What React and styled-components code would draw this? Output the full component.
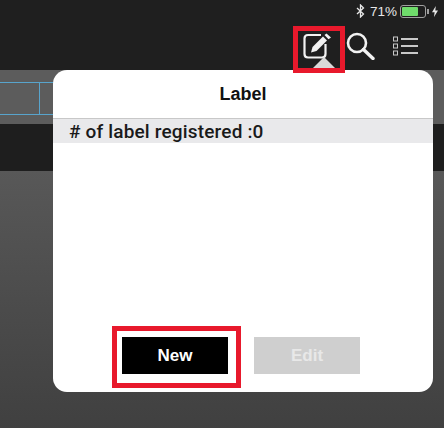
import React from 'react';
import styled, { createGlobalStyle } from 'styled-components';

const Global = createGlobalStyle`
  html, body { margin: 0; padding: 0; background: #1f1f1f; }
  * { box-sizing: border-box; }
`;

const Page = styled.div`
  position: relative;
  width: 444px;
  height: 428px;
  overflow: hidden;
  display: flex;
  flex-direction: column;
  font-family: "Liberation Sans", Arial, sans-serif;
  background: #1f1f1f;
`;

const StatusBar = styled.div`
  height: 22px;
  display: flex;
  align-items: center;
  justify-content: flex-end;
  padding-right: 6px;
  color: #e8e8e8;
  font-size: 13.5px;
`;

const Percent = styled.span`
  margin: 0 3px 0 5px;
`;

const Battery = styled.div`
  width: 26px;
  height: 13px;
  border: 1px solid #a0a0a0;
  border-radius: 3px;
  padding: 1px;
`;

const BatteryLevel = styled.div`
  height: 100%;
  background: #6fdc6b;
  border-radius: 1px;
`;

const BatteryNub = styled.div`
  width: 2px;
  height: 5px;
  background: #a0a0a0;
  margin: 0 3px 0 1px;
`;

const NavBar = styled.div`
  height: 48px;
  display: flex;
  align-items: flex-start;
  justify-content: flex-end;
  padding: 10px 26px 0 0;
`;

const IconWrap = styled.div`
  height: 28px;
  display: flex;
  align-items: center;
  margin-left: ${p => p.$gap || 0}px;
`;

const Toolbar = styled.div`
  height: 54px;
  background: #5c5c5c;
  padding: 12px 30px 0 0;
`;

const Grid = styled.div`
  height: 33px;
  border-top: 1px solid #58a4cc;
  border-bottom: 1px solid #58a4cc;
  padding-left: 39px;
`;

const GridCell = styled.div`
  height: 100%;
  border-left: 1px solid #58a4cc;
`;

const DarkBand = styled.div`
  height: 47px;
  background: #1e1e1e;
`;

const Content = styled.div`
  flex: 1;
  background: linear-gradient(#585858, #404040);
`;

const Popover = styled.div`
  position: absolute;
  left: 53px;
  top: 70px;
  width: 380px;
  height: 322px;
  background: #fff;
  border-radius: 14px;
  display: flex;
  flex-direction: column;
  overflow: hidden;
`;

const Title = styled.div`
  height: 48px;
  display: flex;
  align-items: center;
  justify-content: center;
  font-size: 18px;
  font-weight: 700;
  color: #111;
`;

const CountRow = styled.div`
  height: 25px;
  background: #e9e9eb;
  border-top: 1px solid #c8c8c8;
  padding-left: 16px;
  font-family: Roboto, "Liberation Sans", sans-serif;
  font-size: 19px;
  font-weight: 500;
  letter-spacing: 0.17px;
  line-height: 25px;
  color: #1a1a1a;
`;

const Spacer = styled.div`
  flex: 1;
`;

const Buttons = styled.div`
  display: flex;
  justify-content: center;
  gap: 26px;
  padding: 0 4px 18px 0;
`;

const Button = styled.div`
  width: 106px;
  height: 37px;
  display: flex;
  align-items: center;
  justify-content: center;
  font-size: 17px;
  font-weight: 700;
  color: ${p => (p.$primary ? '#fff' : '#e8e8e8')};
  background: ${p => (p.$primary ? '#000' : '#cfcfcf')};
`;

const Highlight = styled.div`
  position: absolute;
  border: 5px solid #e8192c;
  left: ${p => p.$x}px;
  top: ${p => p.$y}px;
  width: ${p => p.$w}px;
  height: ${p => p.$h}px;
`;

const Pointer = styled.div`
  position: absolute;
  left: 311px;
  top: 57px;
  width: 0;
  height: 0;
  border-left: 13px solid transparent;
  border-right: 13px solid transparent;
  border-bottom: 13px solid #d9d9d9;
`;

const BluetoothIcon = () => (
  <svg width="9" height="14" viewBox="0 0 9 14" fill="none" stroke="#e8e8e8" strokeWidth="1.3">
    <path d="M1 4 L7.5 10 L4.5 13 V1 L7.5 4 L1 10" />
  </svg>
);

const BoltIcon = () => (
  <svg width="6" height="11" viewBox="0 0 6 11" fill="#e8e8e8">
    <path d="M3.8 0 L0 6.2 H2.6 L2 11 L6 4.4 H3.3 Z" />
  </svg>
);

const EditIcon = () => (
  <svg width="29" height="26" viewBox="0 0 29 26" fill="none">
    <path d="M18 2 H5 Q1.5 2 1.5 5.5 V21 Q1.5 24.5 5 24.5 H19 Q22.5 24.5 22.5 21 V11" stroke="#f2f2f2" strokeWidth="2.2" />
    <path d="M8 19.5 L9.5 14 L20 3.5 L24 7.5 L13.5 18 Z" fill="#f2f2f2" />
    <path d="M21.5 2 L23.5 0.5 L28 4.5 L25.5 6.3 Z" fill="#f2f2f2" />
  </svg>
);

const SearchIcon = () => (
  <svg width="29" height="28" viewBox="0 0 29 28" fill="none" stroke="#f2f2f2">
    <circle cx="11" cy="11" r="9" strokeWidth="2.6" />
    <path d="M17.5 17.5 L27 26.5" strokeWidth="3.4" strokeLinecap="round" />
  </svg>
);

const ListIcon = () => (
  <svg width="25" height="20" viewBox="0 0 25 20" fill="none" stroke="#c9c9c9">
    <rect x="0.5" y="1" width="4" height="4" />
    <rect x="0.5" y="8" width="4" height="4" />
    <rect x="0.5" y="15" width="4" height="4" />
    <path d="M8 3 H25 M8 10 H25 M8 17 H25" strokeWidth="2" />
  </svg>
);

export default function App() {
  return (
    <Page>
      <Global />
      <StatusBar>
        <BluetoothIcon />
        <Percent>71%</Percent>
        <Battery>
          <BatteryLevel style={{ width: '71%' }} />
        </Battery>
        <BatteryNub />
        <BoltIcon />
      </StatusBar>
      <NavBar>
        <IconWrap><EditIcon /></IconWrap>
        <IconWrap $gap={14}><SearchIcon /></IconWrap>
        <IconWrap $gap={18}><ListIcon /></IconWrap>
      </NavBar>
      <Toolbar>
        <Grid><GridCell /></Grid>
      </Toolbar>
      <DarkBand />
      <Content />
      <Popover>
        <Title>Label</Title>
        <CountRow># of label registered :0</CountRow>
        <Spacer />
        <Buttons>
          <Button $primary>New</Button>
          <Button>Edit</Button>
        </Buttons>
      </Popover>
      <Pointer />
      <Highlight $x={293} $y={26} $w={52} $h={47} />
      <Highlight $x={112} $y={326} $w={129} $h={62} />
    </Page>
  );
}
